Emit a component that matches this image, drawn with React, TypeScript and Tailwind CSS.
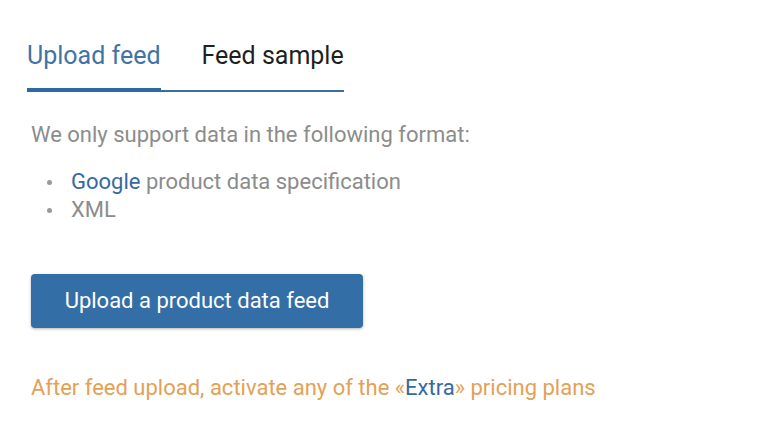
import React from "react";

export default function App() {
  return (
    <div
      className="w-[772px] h-[439px] bg-white overflow-hidden"
      style={{ fontFamily: "Roboto, 'Liberation Sans', sans-serif" }}
    >
      <div className="pl-[27px] pt-[39px]">
        <div className="inline-flex items-end border-b-2 border-[#3a6ea5]">
          <div className="relative pb-[17px] text-[25px] leading-[34px] text-[#3e74a6]">
            Upload feed
            <div className="absolute left-0 right-0 bottom-[-2px] h-[4px] bg-[#2f69a2]" />
          </div>
          <div className="ml-[41px] pb-[17px] text-[25px] leading-[34px] text-[#1f1f1f]">
            Feed sample
          </div>
        </div>
      </div>
      <div className="pl-[31px] pt-[29px] text-[22px] leading-[28px] text-[#8c8c8c]">
        <p>We only support data in the following format:</p>
        <ul className="mt-[19px] pl-[16px]">
          <li className="flex items-center">
            <span className="w-[24px] flex items-center">
              <span className="block w-[5px] h-[5px] rounded-full bg-[#9a9a9a]" />
            </span>
            <span>
              <span className="text-[#3669a0]">Google</span> product data specification
            </span>
          </li>
          <li className="flex items-center">
            <span className="w-[24px] flex items-center">
              <span className="block w-[5px] h-[5px] rounded-full bg-[#9a9a9a]" />
            </span>
            <span>XML</span>
          </li>
        </ul>
        <button className="mt-[50px] w-[332px] h-[54px] rounded-[4px] bg-[#336ea7] text-white text-[22px] shadow-[0_1px_3px_rgba(0,0,0,0.3)] flex items-center justify-center">
          Upload a product data feed
        </button>
        <p className="mt-[46px] text-[#e3a157]">
          After feed upload, activate any of the «<span className="text-[#3669a0]">Extra</span>» pricing plans
        </p>
      </div>
    </div>
  );
}
